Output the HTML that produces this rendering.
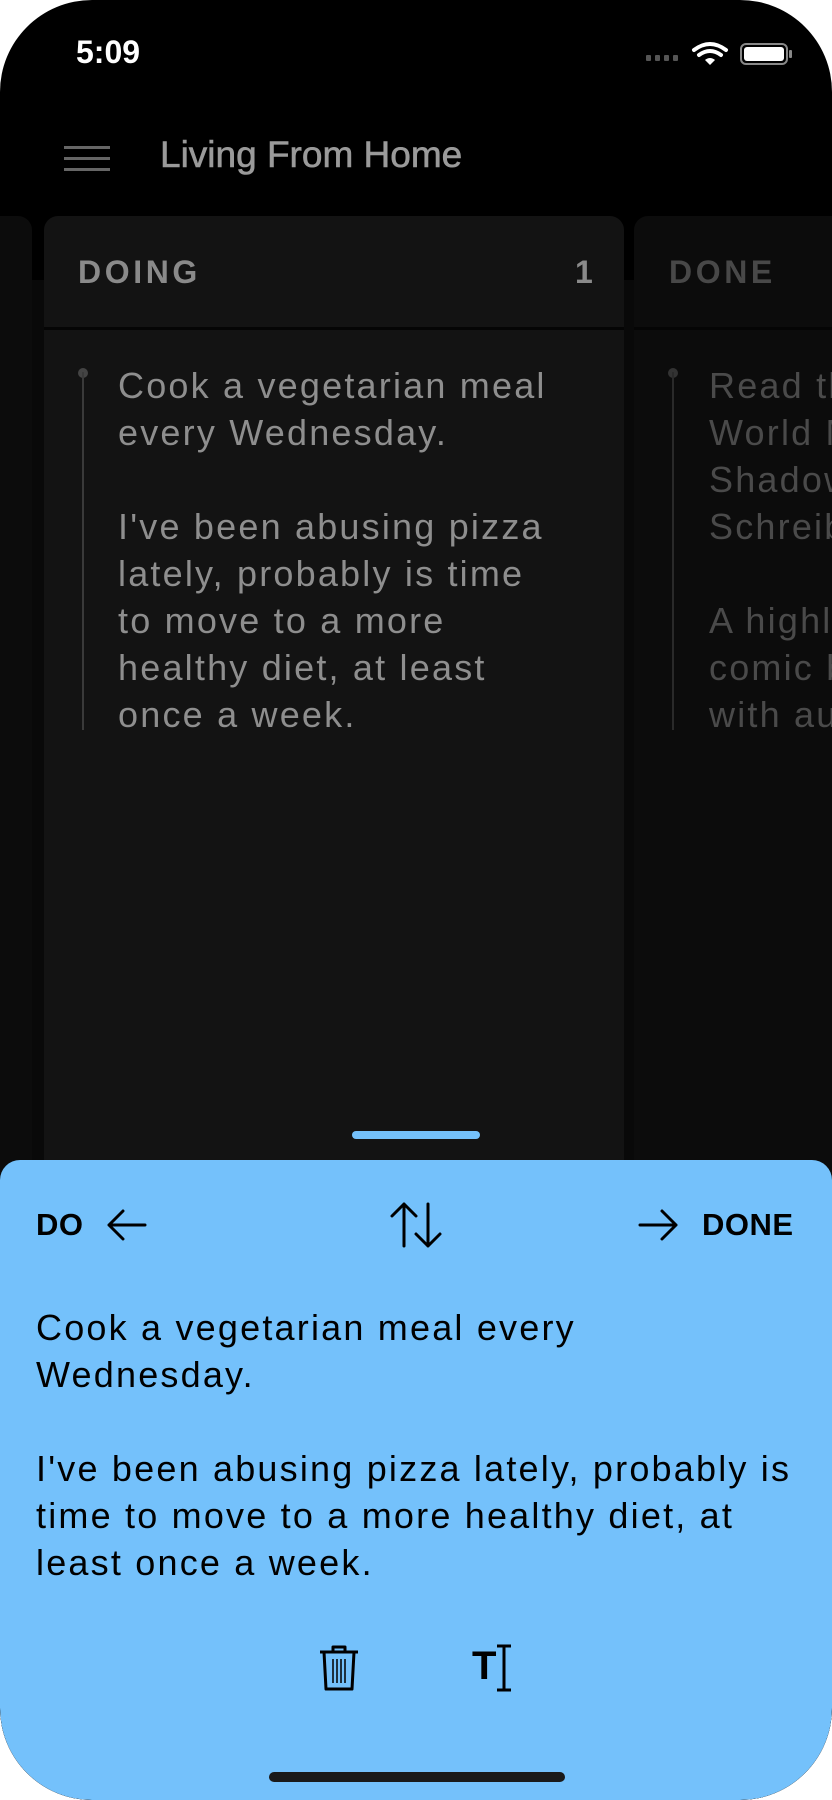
<!DOCTYPE html>
<html><head><meta charset="utf-8"><style>
html,body{margin:0;padding:0;background:#fff;}
.screen{position:relative;width:832px;height:1800px;overflow:hidden;background:#000;border-radius:92px;font-family:"Liberation Sans",sans-serif;}
.abs{position:absolute;}
.time{left:76px;top:34px;color:#fff;font-size:32px;font-weight:bold;}
.ham{left:64px;width:46px;height:3px;background:#666;}
.title{left:160px;top:134px;color:#9a9a9a;font-size:37px;white-space:nowrap;-webkit-text-stroke:0.6px #9a9a9a;}
.below{left:0;top:280px;width:832px;height:1520px;background:#090909;}
.card{background:#131313;border-radius:14px;}
.side{background:#0c0c0c;border-radius:14px;}
.hdr{font-size:32px;font-weight:bold;letter-spacing:3.6px;}
.ctext{font-size:36px;line-height:47px;letter-spacing:2.2px;white-space:nowrap;}
.sheet{left:0;top:1160px;width:832px;height:640px;background:#74c1fb;border-radius:20px 20px 92px 92px;}
.btxt{left:36px;top:1304px;color:#000;font-size:36px;line-height:47px;letter-spacing:2.2px;white-space:nowrap;}
.bl{font-size:31px;font-weight:bold;color:#000;top:1207px;letter-spacing:0.5px;}
</style></head><body>
<div class="screen">
<div class="abs below"></div>
<div class="abs time">5:09</div>
<svg class="abs" style="left:644px;top:40px" width="150" height="28" viewBox="0 0 150 28">
<g fill="#555"><rect x="2" y="15" width="5" height="6" rx="1"/><rect x="11" y="15" width="5" height="6" rx="1"/><rect x="20" y="15" width="5" height="6" rx="1"/><rect x="29" y="15" width="5" height="6" rx="1"/></g>
<g fill="none" stroke="#fff" stroke-width="4" stroke-linecap="round"><path d="M50 10 Q66 -2 82 10"/><path d="M55 15 Q66 7 77 15"/></g>
<path d="M61 20 L66 25 L71 20 Q66 16 61 20Z" fill="#fff"/>
<rect x="97" y="4" width="46" height="20" rx="5" fill="none" stroke="#888" stroke-width="2"/>
<rect x="100" y="7" width="40" height="14" rx="3" fill="#fff"/>
<rect x="145" y="10" width="3" height="8" rx="1" fill="#888"/>
</svg>
<div class="abs ham" style="top:146px"></div>
<div class="abs ham" style="top:157px"></div>
<div class="abs ham" style="top:168px"></div>
<div class="abs title">Living From Home</div>

<div class="abs side" style="left:-20px;top:216px;width:52px;height:1000px"></div>
<div class="abs card" style="left:44px;top:216px;width:580px;height:1000px"></div>
<div class="abs side" style="left:634px;top:216px;width:240px;height:1000px"></div>
<div class="abs" style="left:44px;top:327px;width:580px;height:3px;background:#050505"></div>
<div class="abs" style="left:634px;top:327px;width:200px;height:3px;background:#050505"></div>

<div class="abs hdr" style="left:78px;top:254px;color:#8a8a8a">DOING</div>
<div class="abs hdr" style="left:575px;top:254px;color:#8a8a8a">1</div>
<div class="abs hdr" style="left:669px;top:254px;color:#484848">DONE</div>

<div class="abs" style="left:78px;top:368px;width:10px;height:10px;border-radius:5px;background:#444"></div>
<div class="abs" style="left:82px;top:372px;width:2px;height:358px;background:#3a3a3a"></div>
<div class="abs" style="left:668px;top:368px;width:10px;height:10px;border-radius:5px;background:#333"></div>
<div class="abs" style="left:672px;top:372px;width:2px;height:358px;background:#2a2a2a"></div>

<div class="abs ctext" style="left:118px;top:362px;color:#8e8e8e">Cook a vegetarian meal<br>every Wednesday.<br><br>I've been abusing pizza<br>lately, probably is time<br>to move to a more<br>healthy diet, at least<br>once a week.</div>
<div class="abs ctext" style="left:709px;top:362px;color:#4a4a4a">Read the<br>World Mo<br>Shadow<br>Schreib<br><br>A highly<br>comic bo<br>with aut</div>

<div class="abs" style="left:352px;top:1131px;width:128px;height:8px;border-radius:4px;background:#74c1fb"></div>

<div class="abs sheet"></div>
<div class="abs bl" style="left:36px">DO</div>
<svg class="abs" style="left:105px;top:1206px" width="44" height="38" viewBox="0 0 44 38" fill="none" stroke="#000" stroke-width="3" stroke-linecap="round" stroke-linejoin="round"><path d="M40 19H4M18 5L4 19L18 33"/></svg>
<svg class="abs" style="left:388px;top:1200px" width="56" height="50" viewBox="0 0 56 50" fill="none" stroke="#000" stroke-width="3" stroke-linecap="round" stroke-linejoin="round"><path d="M16 46V4M4 16L16 4L28 16"/><path d="M40 4V46M28 34L40 46L52 34"/></svg>
<svg class="abs" style="left:636px;top:1206px" width="44" height="38" viewBox="0 0 44 38" fill="none" stroke="#000" stroke-width="3" stroke-linecap="round" stroke-linejoin="round"><path d="M4 19H40M26 5L40 19L26 33"/></svg>
<div class="abs bl" style="left:702px">DONE</div>

<div class="abs btxt">Cook a vegetarian meal every<br>Wednesday.<br><br>I've been abusing pizza lately, probably is<br>time to move to a more healthy diet, at<br>least once a week.</div>

<svg class="abs" style="left:318px;top:1644px" width="42" height="48" viewBox="0 0 42 48" fill="none" stroke="#000" stroke-width="3" stroke-linejoin="round"><path d="M2 8H40M15 8V3H27V8M6 8L8 45H34L36 8"/><path d="M15 15V39M19 15V39M23 15V39M27 15V39" stroke-width="1.5"/></svg>
<div class="abs" style="left:472px;top:1644px;font-size:40px;font-weight:bold;color:#000">T</div>
<svg class="abs" style="left:494px;top:1644px" width="20" height="48" viewBox="0 0 20 48" fill="none" stroke="#000" stroke-width="3"><path d="M3 2H17M10 2V46M3 46H17"/></svg>

<div class="abs" style="left:269px;top:1772px;width:296px;height:10px;border-radius:5px;background:#1a1a1a"></div>
</div>
</body></html>
